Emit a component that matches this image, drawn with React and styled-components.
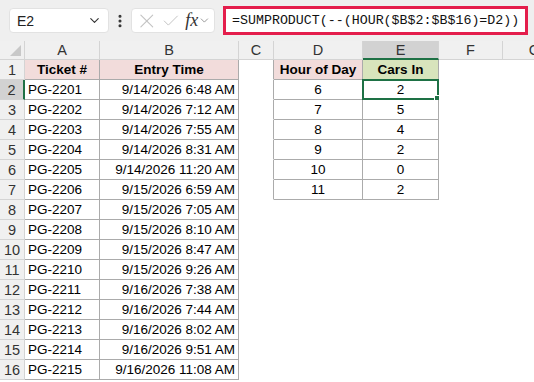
import React from 'react';
import styled, { createGlobalStyle } from 'styled-components';
import { X, Check, ChevronDown, EllipsisVertical } from 'lucide-react';

const GlobalStyle = createGlobalStyle`
  html, body {
    margin: 0;
    padding: 0;
    background: #ffffff;
    font-family: 'Liberation Sans', Arial, sans-serif;
    overflow: hidden;
  }
`;

const GREEN = '#1e7145';

// toolbar
const Toolbar = styled.div`
  display: flex;
  align-items: center;
  width: 534px;
  height: 41px;
  padding: 0 6px 0 9px;
  background: #efefef;
  box-sizing: border-box;
`;

const NameBox = styled.div`
  display: flex;
  align-items: center;
  justify-content: space-between;
  width: 100px;
  height: 25px;
  padding: 0 6px 0 7px;
  box-sizing: border-box;
  background: #fff;
  border: 1px solid #e2e2e2;
  border-radius: 4px;
  font-size: 14px;
  color: #222;
`;

const Dots = styled.div`
  display: flex;
  width: 22px;
  justify-content: center;
  color: #333;
`;

const FxBox = styled.div`
  display: flex;
  align-items: center;
  gap: 2px;
  width: 84px;
  height: 25px;
  padding: 0 3px 0 3px;
  box-sizing: border-box;
  background: #fff;
  border: 1px solid #e2e2e2;
  border-radius: 4px;
  color: #c2c2c2;
`;

const Fx = styled.span`
  font-family: 'Liberation Serif', 'Times New Roman', serif;
  font-style: italic;
  font-size: 18px;
  color: #333;
  margin-left: 3px;
  margin-right: -2px;
`;

const FormulaBar = styled.div`
  display: flex;
  align-items: center;
  margin-left: 8px;
  flex: 1;
  height: 29px;
  padding: 0 6px;
  box-sizing: border-box;
  background: #fff;
  border: 3px solid #e41e4c;
  font-family: 'Liberation Mono', 'DejaVu Sans Mono', monospace;
  font-size: 13.3px;
  color: #111;
  white-space: nowrap;
  overflow: hidden;
`;

// sheet
const Sheet = styled.div`
  display: grid;
  grid-template-columns: 25px 75px 139px 35px 89px 76px 64px 64px;
  grid-template-rows: 19px;
  grid-auto-rows: 20px;
  font-size: 13.5px;
  color: #000;
`;

const ColHead = styled.div`
  display: flex;
  align-items: center;
  justify-content: center;
  background: ${(p) => (p.$active ? '#d2d2d2' : '#f0f0f0')};
  border-right: 1px solid #d4d4d4;
  border-bottom: ${(p) => (p.$active ? `2px solid ${GREEN}` : '1px solid #d4d4d4')};
  box-sizing: border-box;
  color: #333;
  font-size: 14.5px;
  position: relative;
  overflow: hidden;
`;

const Corner = styled(ColHead)`
  &::after {
    content: '';
    position: absolute;
    right: 3px;
    bottom: 3px;
    border-style: solid;
    border-width: 0 0 11px 11px;
    border-color: transparent transparent #c8c8c8 transparent;
  }
`;

const RowHead = styled.div`
  display: flex;
  align-items: center;
  justify-content: center;
  background: ${(p) => (p.$active ? '#d2d2d2' : '#f0f0f0')};
  border-bottom: 1px solid #d4d4d4;
  border-right: ${(p) => (p.$active ? `2px solid ${GREEN}` : '1px solid #d4d4d4')};
  box-sizing: border-box;
  color: #333;
  font-size: 14.5px;
`;

const Cell = styled.div`
  display: flex;
  align-items: center;
  justify-content: ${(p) => p.$align || 'flex-start'};
  padding: 0 3px;
  box-sizing: border-box;
  background: ${(p) => p.$fill || '#fff'};
  font-weight: ${(p) => (p.$bold ? 700 : 400)};
  border-right: 1px solid ${(p) => (p.$boxed || p.$edge ? '#ababab' : 'transparent')};
  border-bottom: 1px solid ${(p) => (p.$boxed ? '#ababab' : 'transparent')};
  white-space: nowrap;
  position: relative;
`;

const Selection = styled.div`
  position: absolute;
  left: -1px;
  top: -1px;
  right: -1px;
  bottom: -1px;
  border: 2px solid ${GREEN};
  pointer-events: none;

  &::after {
    content: '';
    position: absolute;
    right: -5px;
    bottom: -5px;
    width: 6px;
    height: 6px;
    background: ${GREEN};
    border: 1px solid #fff;
  }
`;

const columns = ['A', 'B', 'C', 'D', 'E', 'F', 'G'];

const tickets = [
  ['PG-2201', '9/14/2026 6:48 AM'],
  ['PG-2202', '9/14/2026 7:12 AM'],
  ['PG-2203', '9/14/2026 7:55 AM'],
  ['PG-2204', '9/14/2026 8:31 AM'],
  ['PG-2205', '9/14/2026 11:20 AM'],
  ['PG-2206', '9/15/2026 6:59 AM'],
  ['PG-2207', '9/15/2026 7:05 AM'],
  ['PG-2208', '9/15/2026 8:10 AM'],
  ['PG-2209', '9/15/2026 8:47 AM'],
  ['PG-2210', '9/15/2026 9:26 AM'],
  ['PG-2211', '9/16/2026 7:38 AM'],
  ['PG-2212', '9/16/2026 7:44 AM'],
  ['PG-2213', '9/16/2026 8:02 AM'],
  ['PG-2214', '9/16/2026 9:51 AM'],
  ['PG-2215', '9/16/2026 11:08 AM'],
];

const hours = [
  [6, 2],
  [7, 5],
  [8, 4],
  [9, 2],
  [10, 0],
  [11, 2],
];

const PINK = '#f2dcdb';
const LIME = '#d8e4bc';

const App = () => {
  const rows = [];
  for (let r = 1; r <= 16; r++) {
    const t = tickets[r - 2];
    const h = hours[r - 2];
    const inHours = r <= 7;
    rows.push(
      <React.Fragment key={r}>
        <RowHead $active={r === 2}>{r}</RowHead>
        {r === 1 ? (
          <>
            <Cell $boxed $fill={PINK} $bold $align="center">Ticket #</Cell>
            <Cell $boxed $fill={PINK} $bold $align="center">Entry Time</Cell>
            <Cell $edge />
            <Cell $boxed $fill={PINK} $bold $align="center">Hour of Day</Cell>
            <Cell $boxed $fill={LIME} $bold $align="center">Cars In</Cell>
          </>
        ) : (
          <>
            <Cell $boxed>{t[0]}</Cell>
            <Cell $boxed $align="flex-end">{t[1]}</Cell>
            <Cell $edge={inHours} />
            {inHours ? (
              <>
                <Cell $boxed $align="center">{h[0]}</Cell>
                <Cell $boxed $align="center">
                  {h[1]}
                  {r === 2 && <Selection />}
                </Cell>
              </>
            ) : (
              <>
                <Cell />
                <Cell />
              </>
            )}
          </>
        )}
        <Cell />
        <Cell />
      </React.Fragment>
    );
  }

  return (
    <>
      <GlobalStyle />
      <Toolbar>
        <NameBox>
          <span>E2</span>
          <ChevronDown size={15} color="#333" strokeWidth={1.8} />
        </NameBox>
        <Dots>
          <EllipsisVertical size={16} strokeWidth={2.6} />
        </Dots>
        <FxBox>
          <X size={24} strokeWidth={1.1} />
          <Check size={20} strokeWidth={1.2} />
          <Fx>fx</Fx>
          <ChevronDown size={13} strokeWidth={1.6} color="#888" />
        </FxBox>
        <FormulaBar>=SUMPRODUCT(--(HOUR($B$2:$B$16)=D2))</FormulaBar>
      </Toolbar>
      <Sheet>
        <Corner />
        {columns.map((c) => (
          <ColHead key={c} $active={c === 'E'}>{c}</ColHead>
        ))}
        {rows}
      </Sheet>
    </>
  );
};

export default App;
